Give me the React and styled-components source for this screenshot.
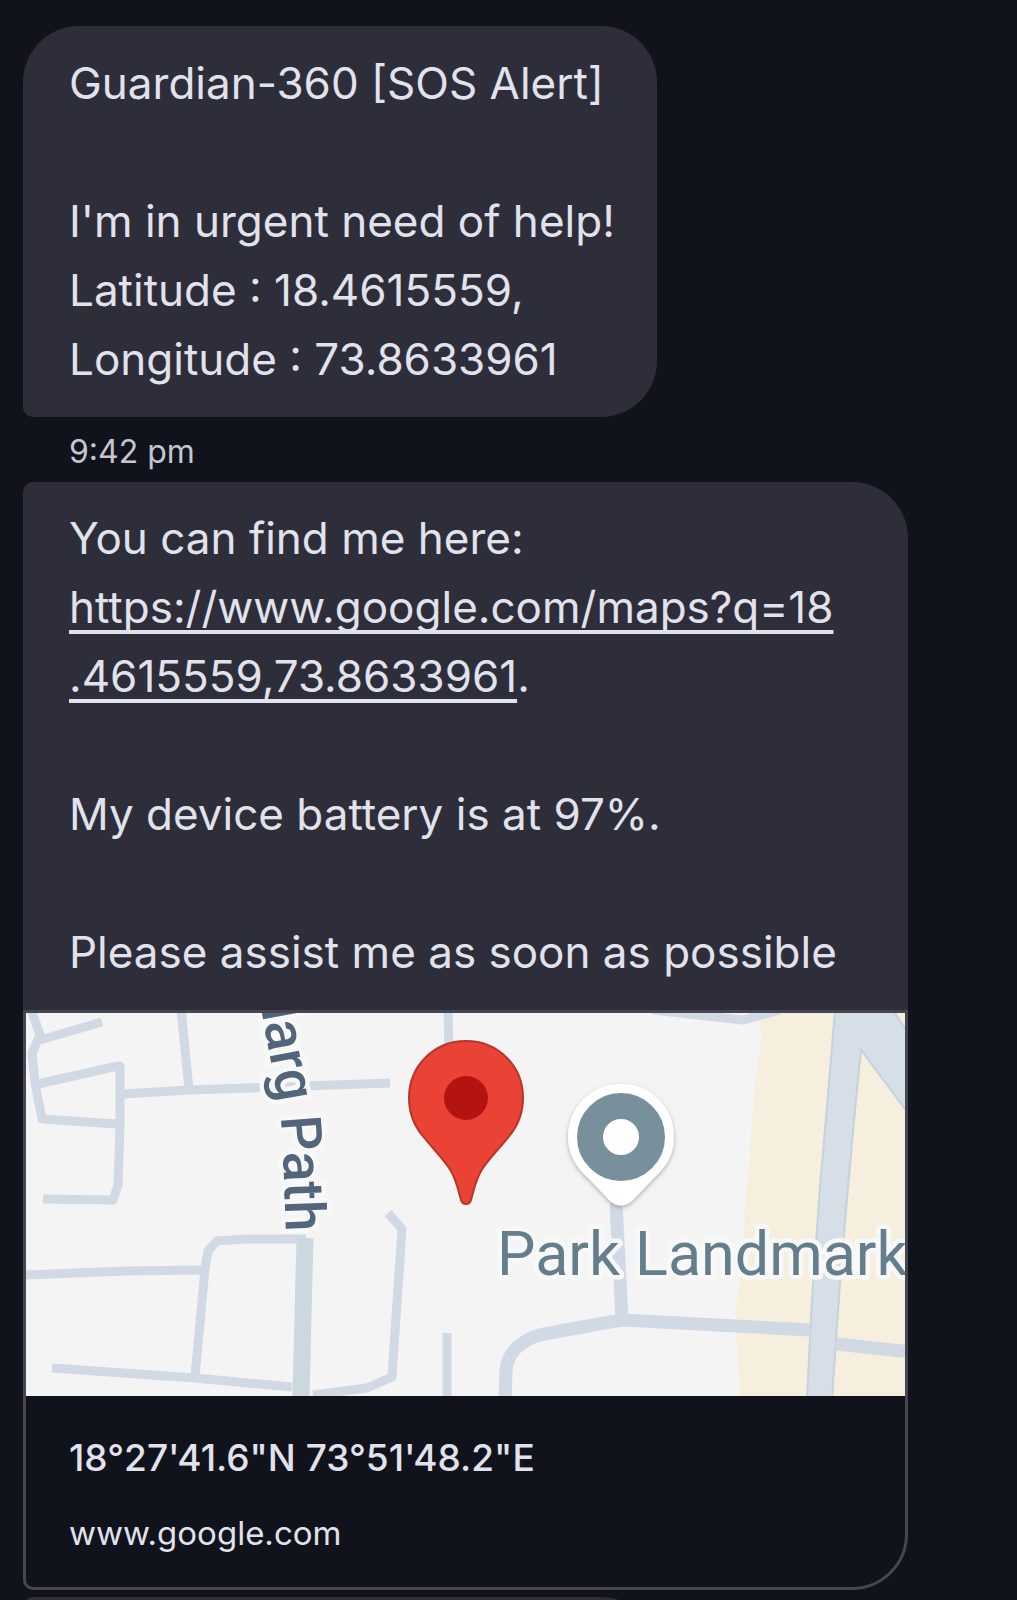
import React from "react";
import styled, { createGlobalStyle } from "styled-components";

const MAPS_URL = "https://www.google.com/maps?q=18.4615559,73.8633961";

const GlobalStyle = createGlobalStyle`
  *, *::before, *::after { box-sizing: border-box; }
  body {
    margin: 0;
    background: #10131c;
    color: #e1e2ec;
    font-family: Inter, Roboto, "Liberation Sans", sans-serif;
  }
`;

const Thread = styled.main`
  display: flex;
  flex-direction: column;
  align-items: flex-start;
  height: 100vh;
  overflow: hidden;
  padding: 26px 109px 0 23px;

  > * { flex-shrink: 0; }
`;

const radii = {
  first: "56px 56px 56px 10px",
  top: "10px 56px 0 0",
  middle: "10px 56px 56px 10px",
};

const Bubble = styled.article`
  max-width: 100%;
  padding: 23px 42px 23px 46px;
  border-radius: ${({ $shape }) => radii[$shape]};
  background: #2d2e39;
`;

const TopBubble = styled(Bubble)`
  padding-top: 22px;
`;

const NextBubble = styled(Bubble)`
  width: 634px;
  height: 115px;
  margin-top: 7px;
`;

const MessageGroup = styled.div`
  width: 100%;
`;

const Message = styled.p`
  margin: 0;
  font-size: 44px;
  line-height: 69px;
  white-space: pre-line;
`;

const MessageLink = styled.a`
  color: inherit;
  text-decoration: underline;
  text-decoration-thickness: 4px;
  text-decoration-skip-ink: none;
  text-underline-offset: 7px;
`;

const Time = styled.time`
  padding: 4px 46px 0;
  color: #c4c6d0;
  font-size: 32px;
  line-height: 61px;
`;

const Preview = styled.a`
  display: block;
  overflow: hidden;
  border: 3px solid #444651;
  border-radius: 0 0 56px 10px;
  color: inherit;
  text-decoration: none;
`;

const MapImage = styled.svg`
  display: block;
  width: 100%;
  height: auto;
  background: #f4f4f4;
`;

const PreviewText = styled.div`
  display: flex;
  flex-direction: column;
  gap: 27px;
  padding: 36px 43px 32px;
`;

const PreviewTitle = styled.strong`
  font-size: 37px;
  font-weight: 500;
  line-height: 52px;
`;

const PreviewHost = styled.span`
  font-size: 33px;
  line-height: 44px;
`;

function LocationMap() {
  return (
    <MapImage viewBox="0 0 879 383" role="img" aria-label="Map near Park Landmark">
      <defs>
        <path id="marg" d="M214 -120 L241 28 C248 65 256 100 257 137 L260 219" />
        <filter id="pinShadow" x="-20%" y="-20%" width="140%" height="140%">
          <feDropShadow dx="0" dy="2" stdDeviation="2" floodColor="#5f6b7a" floodOpacity="0.5" />
        </filter>
      </defs>

      <path
        fill="#f6efde"
        d="M751 0 L732 7 L736 20 L729 70 L724 137 L719 194 L716 254 L709 300 L714 383 H879 V0 Z"
      />

      <g fill="none" stroke="#d1d9e5" strokeWidth="9" strokeLinejoin="round">
        <path d="M5 -4 L14 22 L6 40 L9 70 L16 106 L91 111" />
        <path d="M14 27 L76 9" />
        <path d="M12 71 L87 54 L94 53 V114 L92 172 L87 187 L17 186" />
        <path d="M97 81 L163 77 L364 70" />
        <path d="M155 -4 L163 76" />
        <path d="M0 262 L100 258 L178 257" />
        <path d="M280 226 H220 L191 228 L182 238 L179 256 L169 363" />
        <path d="M26 355 L169 365 L266 374" />
        <path d="M287 382 L341 375 L366 364 L376 216 L362 200" />
        <path d="M422 0 L423 40" />
        <path d="M421 320 V383" />
        <path d="M627 -3 L717 7 L754 -3" />
      </g>
      <path d="M279 225 L275 383" fill="none" stroke="#ccd8e0" strokeWidth="17" />
      <g fill="none" stroke="#d1d9e5" strokeWidth="13" strokeLinejoin="round">
        <path d="M479 390 L480 357 Q482 339 497 330 Q506 323 518 321 L584 309 L597 307 L784 317" />
        <path d="M590 190 L596 307" />
        <path d="M811 331 L885 339" />
      </g>
      <path
        fill="#d6dfe7"
        stroke="#c7d2dd"
        strokeWidth="2"
        d="M809 -3 L803 70 L794 174 L786 287 L781 386 H806 L814 270 L822 174 L829 97 L835 37 L882 100 V20 L867 -3 Z"
      />

      <g paintOrder="stroke" stroke="#f8f8f8" strokeWidth="9" strokeLinejoin="round">
        <text fontFamily="Roboto, sans-serif" fontWeight="500" fontSize="56" fill="#52657a">
          <textPath href="#marg" startOffset="100%" textAnchor="end">
            Marg Path
          </textPath>
        </text>
        <text x="471" y="262" fontFamily="Roboto, sans-serif" fontSize="61" fill="#647e8c">
          Park Landmark
        </text>
      </g>

      <path
        fill="#ea4335"
        stroke="#b8352b"
        strokeWidth="2"
        d="M440 28 C408 28 383 53 383 85 C383 100 387 111 396 122 C406 135 418 146 425 158 C431 169 432 177 435 187 Q436 191 440 191 Q444 191 445 187 C448 177 449 169 455 158 C462 146 474 135 484 122 C493 111 497 100 497 85 C497 53 472 28 440 28 Z"
      />
      <circle cx="440" cy="85" r="22" fill="#b31412" />

      <path
        fill="#fff"
        filter="url(#pinShadow)"
        d="M595 71 C565 71 542 94 542 124 C542 142 550 154 563 166 L583 187 Q595 198 607 187 L627 166 C640 154 648 142 648 124 C648 94 625 71 595 71 Z"
      />
      <circle cx="595" cy="124" r="31" fill="none" stroke="#78909c" strokeWidth="26" />
    </MapImage>
  );
}

export default function App() {
  return (
    <>
      <GlobalStyle />
      <Thread>
        <Bubble $shape="first">
          <Message>
            {"Guardian-360 [SOS Alert]\n\nI'm in urgent need of help!\nLatitude : 18.4615559,\nLongitude : 73.8633961"}
          </Message>
        </Bubble>
        <Time dateTime="21:42">9:42 pm</Time>
        <MessageGroup>
          <TopBubble $shape="top">
            <Message>
              {"You can find me here:\n"}
              <MessageLink href={MAPS_URL}>
                {"https://www.google.com/maps?q=18"}
                <br />
                {".4615559,73.8633961"}
              </MessageLink>
              {".\n\nMy device battery is at 97%.\n\nPlease assist me as soon as possible"}
            </Message>
          </TopBubble>
          <Preview href={MAPS_URL}>
            <LocationMap />
            <PreviewText>
              <PreviewTitle>18°27'41.6"N 73°51'48.2"E</PreviewTitle>
              <PreviewHost>www.google.com</PreviewHost>
            </PreviewText>
          </Preview>
        </MessageGroup>
        <NextBubble $shape="middle" />
      </Thread>
    </>
  );
}
